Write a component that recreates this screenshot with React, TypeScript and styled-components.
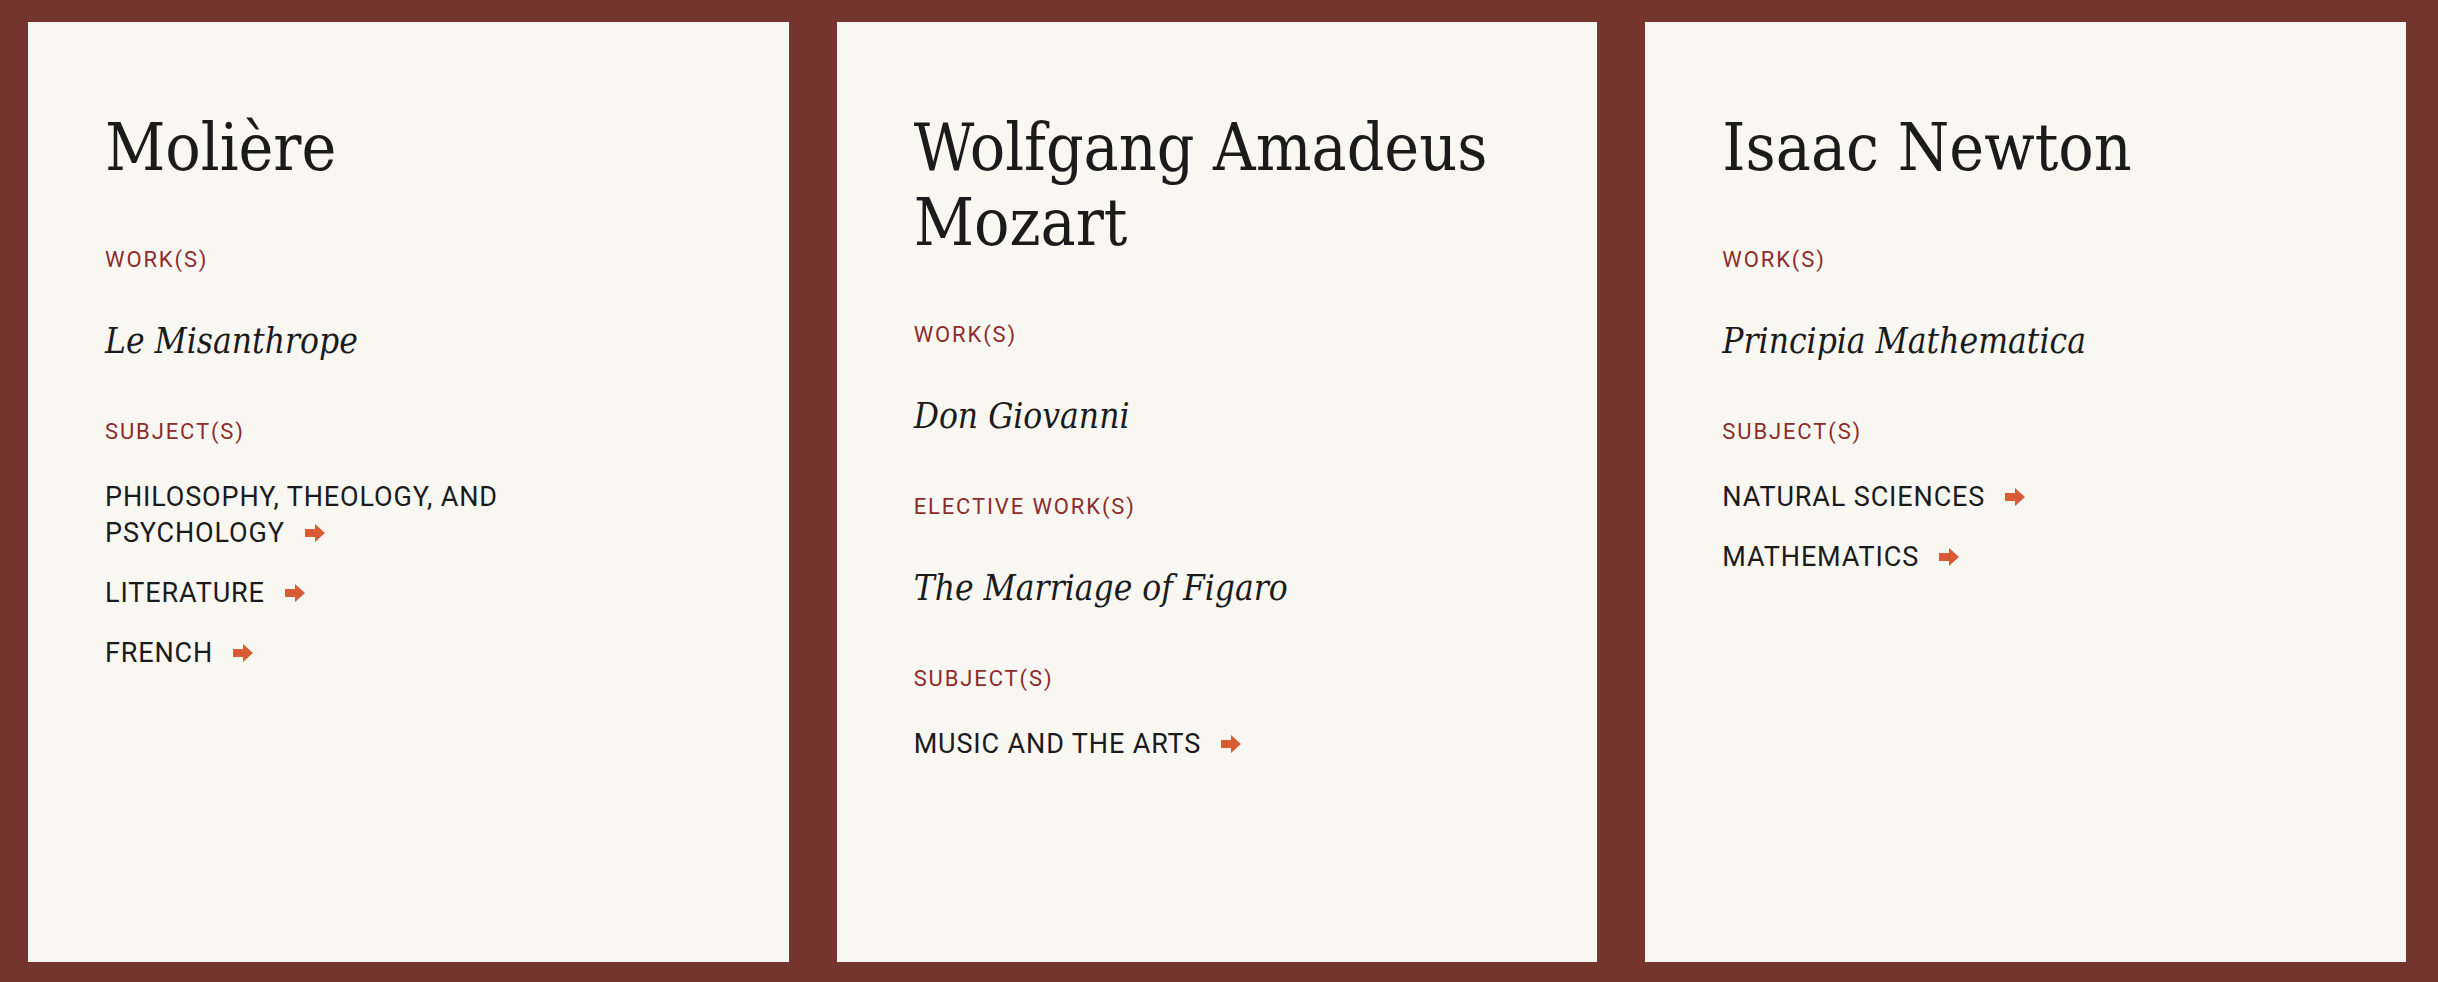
import React from "react";
import styled, { createGlobalStyle } from "styled-components";

const GlobalStyle = createGlobalStyle`
  html, body {
    margin: 0;
    padding: 0;
    background: #74352e;
  }
  * { box-sizing: border-box; }
`;

const Page = styled.main`
  display: grid;
  grid-template-columns: repeat(3, 1fr);
  gap: 48px;
  height: 100vh;
  padding: 22px 32px 20px 28px;
  background: #74352e;
`;

const Card = styled.article`
  background: #f8f7f2;
  padding: 88px 77px;
  display: flex;
  flex-direction: column;
  align-items: flex-start;
`;

const Name = styled.h2`
  margin: 0 0 60px;
  font-family: "DejaVu Serif Condensed", "DejaVu Serif", serif;
  font-weight: 400;
  font-size: 65.5px;
  line-height: 75px;
  color: #1b1b1b;
`;

const Label = styled.h3`
  margin: 0;
  font-family: Roboto, "Noto Sans", sans-serif;
  font-weight: 400;
  font-size: 22px;
  line-height: 30px;
  letter-spacing: 0.085em;
  text-transform: uppercase;
  color: #8e2b2b;
`;

const Work = styled.p`
  margin: 44px 0 54px;
  font-family: "DejaVu Serif Condensed", "DejaVu Serif", serif;
  font-style: italic;
  font-size: 35px;
  line-height: 44px;
  color: #1b1b1b;
`;

const Subjects = styled.ul`
  list-style: none;
  margin: 32px 0 0;
  padding: 0;
  display: flex;
  flex-direction: column;
  gap: 24px;
`;

const Subject = styled.li`
  font-family: Roboto, "Noto Sans", sans-serif;
  font-size: 27px;
  line-height: 36px;
  letter-spacing: 0.032em;
  text-transform: uppercase;
  color: #1b1b1b;
  max-width: 440px;
`;

const Tail = styled.span`
  white-space: nowrap;
`;

const Arrow = styled.svg`
  display: inline-block;
  width: 20px;
  height: 18px;
  margin-left: 20px;
  vertical-align: 0px;
  fill: #d95b35;
`;

const ArrowIcon = () => (
  <Arrow viewBox="0 0 20 18" aria-hidden="true">
    <polygon points="0,5 10,5 10,0 20,9 10,18 10,13 0,13" />
  </Arrow>
);

const SubjectLink = ({ text }: { text: string }) => {
  const i = text.lastIndexOf(" ");
  const head = i >= 0 ? text.slice(0, i + 1) : "";
  const last = i >= 0 ? text.slice(i + 1) : text;
  return (
    <Subject>
      {head}
      <Tail>
        {last}
        <ArrowIcon />
      </Tail>
    </Subject>
  );
};

type Section = { label: string; works: string[] };
type Person = { name: string; sections: Section[]; subjects: string[] };

const people: Person[] = [
  {
    name: "Molière",
    sections: [{ label: "Work(s)", works: ["Le Misanthrope"] }],
    subjects: ["Philosophy, Theology, and Psychology", "Literature", "French"],
  },
  {
    name: "Wolfgang Amadeus Mozart",
    sections: [
      { label: "Work(s)", works: ["Don Giovanni"] },
      { label: "Elective Work(s)", works: ["The Marriage of Figaro"] },
    ],
    subjects: ["Music and the Arts"],
  },
  {
    name: "Isaac Newton",
    sections: [{ label: "Work(s)", works: ["Principia Mathematica"] }],
    subjects: ["Natural Sciences", "Mathematics"],
  },
];

export default function App() {
  return (
    <>
      <GlobalStyle />
      <Page>
        {people.map((p) => (
          <Card key={p.name}>
            <Name>{p.name}</Name>
            {p.sections.map((s) => (
              <React.Fragment key={s.label}>
                <Label>{s.label}</Label>
                {s.works.map((w) => (
                  <Work key={w}>{w}</Work>
                ))}
              </React.Fragment>
            ))}
            <Label>Subject(s)</Label>
            <Subjects>
              {p.subjects.map((sub) => (
                <SubjectLink key={sub} text={sub} />
              ))}
            </Subjects>
          </Card>
        ))}
      </Page>
    </>
  );
}
